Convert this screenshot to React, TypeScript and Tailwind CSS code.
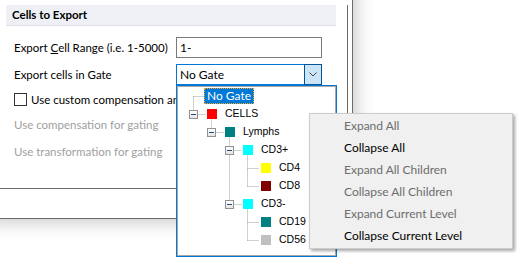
type Node = { label: string; level: number; color?: string; box?: boolean; selected?: boolean };

const nodes: Node[] = [
  { label: 'No Gate', level: 0, selected: true },
  { label: 'CELLS', level: 0, color: 'bg-[#ff0000]', box: true },
  { label: 'Lymphs', level: 1, color: 'bg-[#008080]', box: true },
  { label: 'CD3+', level: 2, color: 'bg-[#00ffff]', box: true },
  { label: 'CD4', level: 3, color: 'bg-[#ffff00]' },
  { label: 'CD8', level: 3, color: 'bg-[#800000]' },
  { label: 'CD3-', level: 2, color: 'bg-[#00ffff]', box: true },
  { label: 'CD19', level: 3, color: 'bg-[#008080]' },
  { label: 'CD56', level: 3, color: 'bg-[#c0c0c0]' },
];

const indent = ['pl-[11px]', 'pl-[29px]', 'pl-[47px]', 'pl-[65px]'];

const menu = [
  { label: 'Expand All', enabled: false },
  { label: 'Collapse All', enabled: true },
  { label: 'Expand All Children', enabled: false },
  { label: 'Collapse All Children', enabled: false },
  { label: 'Expand Current Level', enabled: false },
  { label: 'Collapse Current Level', enabled: true },
];

// dotted connector segments, in tree content coordinates
const lines: [number, number, number, number][] = [
  [15, 9, 26, 9],
  [15, 9, 15, 23],
  [20, 27, 27, 27],
  [33, 32, 33, 41],
  [38, 45, 45, 45],
  [51, 50, 51, 59],
  [56, 63, 63, 63],
  [51, 67, 51, 113],
  [56, 117, 63, 117],
  [69, 68, 69, 99],
  [69, 81, 81, 81],
  [69, 99, 81, 99],
  [69, 122, 69, 153],
  [69, 135, 81, 135],
  [69, 153, 81, 153],
];

function ExpandBox() {
  return (
    <span className="flex h-[9px] w-[9px] items-center justify-center border border-[#919191] bg-gradient-to-b from-white to-[#e4e4e4]">
      <span className="h-px w-[5px] bg-[#2b4a7c]" />
    </span>
  );
}

function GateTree() {
  return (
    <div className="relative h-full border border-[#a9a9a9] bg-white">
      <svg className="absolute left-0 top-0" width="160" height="170">
        {lines.map(([x1, y1, x2, y2], i) => (
          <line
            key={i}
            x1={x1 + 0.5}
            y1={y1 + 0.5}
            x2={x2 + 0.5}
            y2={y2 + 0.5}
            stroke="#a0a0a0"
            strokeDasharray="1 1"
          />
        ))}
      </svg>
      <div className="relative flex flex-col font-['Liberation_Sans',sans-serif] text-[10.5px] text-black">
        {nodes.map((n) =>
          n.selected ? (
            <div key={n.label} className="flex h-[18px] items-center pl-[26px]">
              <span className="flex h-[16px] items-center border border-dotted border-[#f5a623] bg-[#0078d7] px-[2px] font-['Lato',sans-serif] text-[12px] text-white">
                {n.label}
              </span>
            </div>
          ) : (
            <div key={n.label} className={`flex h-[18px] items-center ${indent[n.level]}`}>
              <span className="w-[9px]">{n.box && <ExpandBox />}</span>
              <span className={`ml-[9px] h-[10px] w-[10px] ${n.color}`} />
              <span className="ml-[8px]">{n.label}</span>
            </div>
          ),
        )}
      </div>
    </div>
  );
}

export default function App() {
  return (
    <div className="relative h-[265px] w-[524px] overflow-hidden bg-white font-['Lato',sans-serif] text-[11.5px] text-black">
      <div className="-ml-5 -mt-5 h-[239px] w-[373px] border-b border-r border-[#6b6b6b] bg-white pl-5 pt-5 shadow-[0_0_20px_rgba(0,0,0,0.28)]">
        <div className="h-[184px] w-[348px] border-b border-r border-[#6b6b6b]">
          <div className="ml-[6px] mt-[5px] flex h-[21px] w-[330px] items-center border-b border-[#dde1e7] bg-[#eef0f5] pl-[6px] font-bold">
            Cells to Export
          </div>

          <div className="mt-[11px] flex h-[21px] items-center whitespace-nowrap">
            <span className="w-[176px] pl-[14px]">
              Export <span className="underline">C</span>ell Range (i.e. 1-5000)
            </span>
            <div className="flex h-[21px] w-[146px] items-center border border-[#7a7a7a] px-[3px] text-[12px]">1-</div>
          </div>

          <div className="mt-[6px] flex h-[21px] items-center">
            <span className="w-[176px] pl-[14px]">Export cells in Gate</span>
            <div className="flex h-[21px] w-[146px] items-stretch border border-[#0078d7] text-[12px]">
              <span className="flex flex-1 items-center px-[3px]">No Gate</span>
              <span className="-my-px -mr-px flex w-[18px] items-center justify-center border border-[#005499] bg-[#cce4f7]">
                <svg width="8" height="5" viewBox="0 0 8 5">
                  <polyline points="0.5,0.5 4,4 7.5,0.5" fill="none" stroke="#444444" strokeWidth="1" />
                </svg>
              </span>
            </div>
          </div>

          <div className="mt-[8px] flex h-[13px] w-[176px] items-center overflow-hidden whitespace-nowrap pl-[14px]">
            <span className="h-[13px] w-[13px] shrink-0 border border-[#333333] bg-white" />
            <span className="ml-[4px]">Use custom compensation and transformation</span>
          </div>

          <div className="mt-[11px] flex h-[16px] items-center pl-[14px] text-[#a0a0a0]">
            Use compensation for gating
          </div>
          <div className="mt-[11px] flex h-[16px] items-center pl-[14px] text-[#a0a0a0]">
            Use transformation for gating
          </div>
        </div>
      </div>

      <div className="absolute left-[176px] top-[85px] h-[172px] w-[161px] border border-[#0078d7] bg-white">
        <GateTree />
      </div>

      <div className="absolute left-[309px] top-[113px] h-[136px] w-[204px] border border-[#cccccc] bg-[#f0f0f0] pt-[1px] text-[12px] shadow-[2px_2px_3px_rgba(0,0,0,0.35)]">
        {menu.map((m) => (
          <div
            key={m.label}
            className={`flex h-[22px] items-center pl-[34px] ${m.enabled ? 'text-black' : 'text-[#6d6d6d]'}`}
          >
            {m.label}
          </div>
        ))}
      </div>
    </div>
  );
}
